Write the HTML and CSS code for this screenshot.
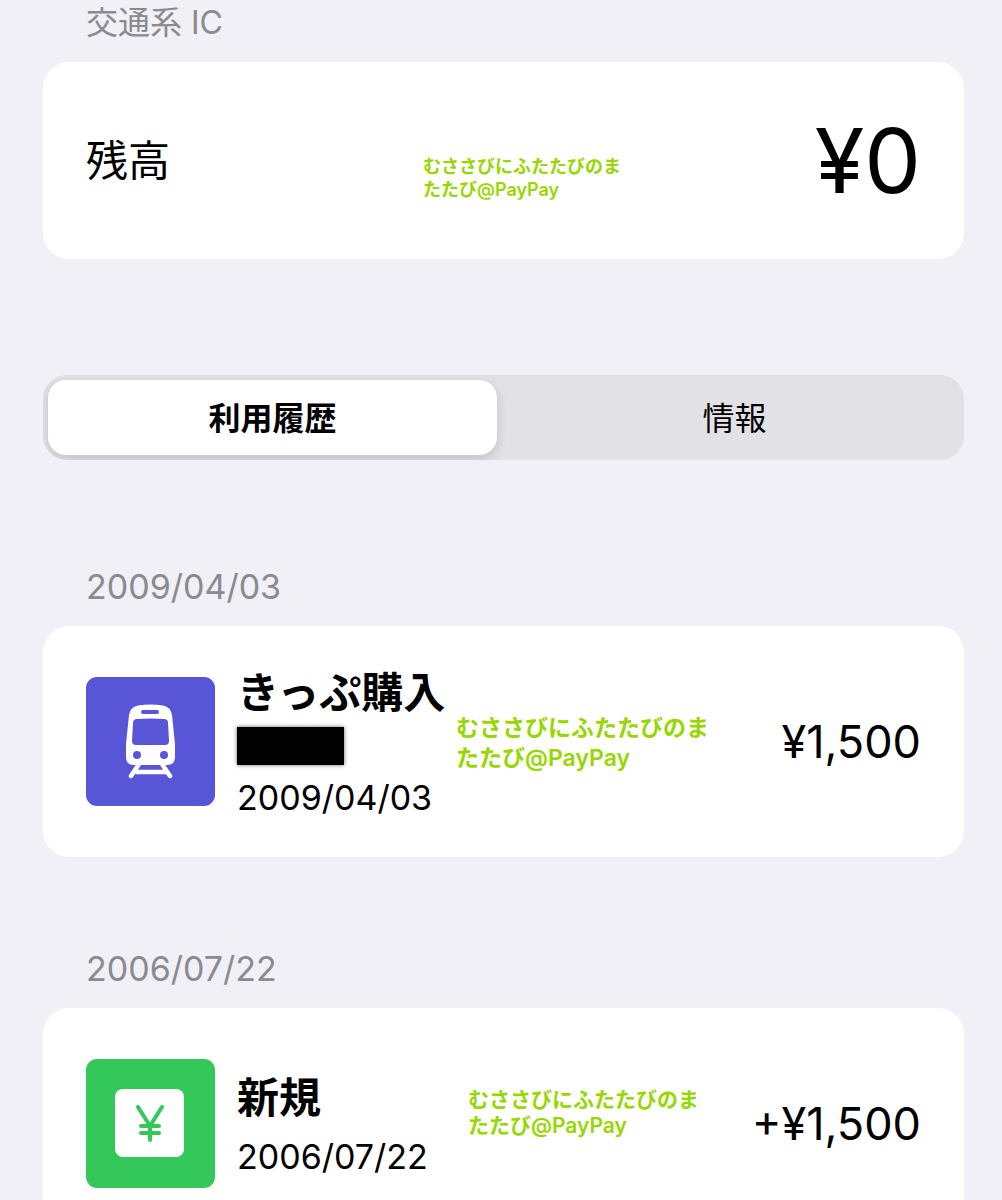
FILE: index.html
```
<!DOCTYPE html>
<html lang="ja">
<head>
  <meta charset="UTF-8">
  <meta name="viewport" content="width=device-width, initial-scale=1.0">
  <title>交通系IC</title>
  <link rel="stylesheet" href="styles.css">
</head>
<body>
  <main class="page">
    <!-- Balance -->
    <section class="balance">
      <h2 class="section-label">交通系 IC</h2>
      <div class="card balance-card">
        <span class="balance-name">残高</span>
        <p class="watermark watermark-small">むささびにふたたびのま<br>たたび@PayPay</p>
        <span class="balance-amount">¥0</span>
      </div>
    </section>

    <div class="tabs" role="tablist">
      <button class="tab active" type="button" role="tab" aria-selected="true">利用履歴</button>
      <button class="tab" type="button" role="tab" aria-selected="false">情報</button>
    </div>

    <!-- History -->
    <section class="history">
      <h2 class="section-label">2009/04/03</h2>
      <div class="card entry">
        <svg class="entry-icon" viewBox="0 0 129 129" aria-hidden="true">
          <rect width="129" height="129" rx="11" fill="#5856d6"/>
          <path d="M52 28.500q12.500-2 25 0q8 1.500 9 9.500l3 29v13q0 8-8 8H48q-8 0-8-8V67l3-29q1-8 9-9.500z" fill="#fff"/>
          <rect x="55" y="33" width="18" height="4" rx="2" fill="#5856d6"/>
          <path d="M51 42q13.500-1 27 0q4 0 4 4l1 18q0 4-4 4H50q-4 0-4-4l1-18q0-4 4-4z" fill="#5856d6"/>
          <circle cx="51" cy="78" r="4" fill="#5856d6"/>
          <circle cx="78" cy="78" r="4" fill="#5856d6"/>
          <path d="M53 87L45 99M76 87L84 99M50 95H80" fill="none" stroke="#fff" stroke-width="4.500" stroke-linecap="round"/>
        </svg>
        <div class="entry-text">
          <h3 class="entry-title">きっぷ購入</h3>
          <div class="redacted"></div>
          <time class="entry-date" datetime="2009-04-03">2009/04/03</time>
        </div>
        <p class="watermark watermark-large">むささびにふたたびのま<br>たたび@PayPay</p>
        <span class="entry-amount">¥1,500</span>
      </div>
    </section>

    <section class="history">
      <h2 class="section-label">2006/07/22</h2>
      <div class="card entry">
        <svg class="entry-icon" viewBox="0 0 129 129" aria-hidden="true">
          <rect width="129" height="129" rx="11" fill="#34c759"/>
          <rect x="29" y="30" width="69" height="68" rx="8" fill="#fff"/>
          <path d="M52 48L64 67L76 48M64 67V81M55 67H73M55 74H73" fill="none" stroke="#34c759" stroke-width="4" stroke-linecap="round" stroke-linejoin="round"/>
        </svg>
        <div class="entry-text">
          <h3 class="entry-title">新規</h3>
          <time class="entry-date" datetime="2006-07-22">2006/07/22</time>
        </div>
        <p class="watermark watermark-medium">むささびにふたたびのま<br>たたび@PayPay</p>
        <span class="entry-amount">+¥1,500</span>
      </div>
    </section>
  </main>
</body>
</html>
```
FILE: styles.css
```
* {
  box-sizing: border-box;
}
body {
  margin: 0;
  background-color: #f1f0f6;
  color: #000;
  font-family: Inter, "Noto Sans CJK JP", sans-serif;
}
h2, h3, p {
  margin: 0;
}
.page {
  padding: 0 38px 0 43px;
}
.section-label {
  padding: 0 43px;
  margin-bottom: 17px;
  color: #8a8a8f;
  font-size: 34px;
  font-weight: 400;
  line-height: 44px;
}
.card {
  position: relative;
  display: flex;
  align-items: center;
  padding: 32px 43px;
  background: #fff;
  border-radius: 26px;
}

/* Balance */
.balance {
  padding-top: 1px;
}
.balance .section-label {
  font-size: 32px;
}
.balance-card {
  justify-content: space-between;
  min-height: 197px;
}
.balance-name {
  font-size: 42px;
  line-height: 52px;
}
.balance-amount {
  font-size: 90px;
  line-height: 104px;
}

/* Tabs */
.tabs {
  display: grid;
  grid-template-columns: 1fr 1fr;
  gap: 13px;
  margin: 116px 0 105px;
  padding: 5px;
  overflow: hidden;
  background: #e2e1e6;
  border-radius: 24px;
}
.tab {
  height: 75px;
  padding: 0 0 4px;
  border: 0;
  border-radius: 18px;
  background: none;
  color: #000;
  font-family: inherit;
  font-size: 32px;
}
.tab.active {
  background: #fff;
  font-weight: 700;
  box-shadow: 0 4px 12px rgba(0, 0, 0, 0.14);
}

/* History */
.history {
  margin-bottom: 90px;
}
.entry {
  gap: 22px;
  min-height: 231px;
}
.entry-icon {
  flex: none;
  width: 129px;
  height: 129px;
}
.entry-text {
  display: flex;
  flex-direction: column;
  gap: 8px;
  margin-top: 6px;
}
.entry-title {
  font-size: 42px;
  font-weight: 700;
  line-height: 52px;
}
.entry-date {
  font-size: 34px;
  line-height: 50px;
}
.redacted {
  width: 107px;
  height: 38px;
  background: #000;
  box-shadow: 0 0 4px rgba(0, 0, 0, 0.6);
}
.entry-amount {
  margin-left: auto;
  font-size: 45px;
  line-height: 52px;
}

/* Name stamped over each card */
.watermark {
  position: absolute;
  color: #97d700;
  font-weight: 600;
  white-space: nowrap;
}
.watermark-small {
  top: 93px;
  left: 380px;
  font-size: 18px;
  line-height: 23px;
}
.watermark-medium {
  top: 79px;
  left: 425px;
  font-size: 21px;
  line-height: 26px;
}
.watermark-large {
  top: 87px;
  left: 413px;
  font-size: 23px;
  line-height: 30px;
}
```
